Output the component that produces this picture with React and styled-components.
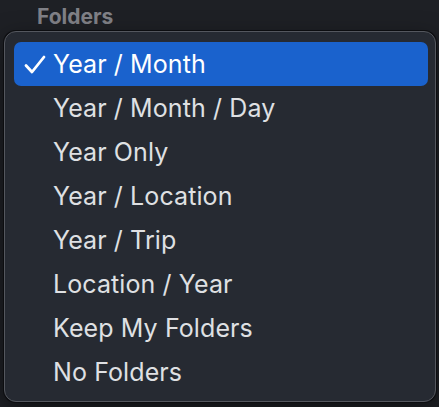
import React from "react";
import styled, { createGlobalStyle } from "styled-components";

const Global = createGlobalStyle`
  html, body { margin: 0; padding: 0; background: #1e2025; }
  body { font-family: Inter, "Noto Sans", sans-serif; -webkit-font-smoothing: antialiased; }
`;

const Page = styled.div`
  position: relative;
  width: 439px;
  height: 407px;
  overflow: hidden;
  background: #1e2025;
`;

const SectionLabel = styled.div`
  padding: 4px 0 0 37px;
  font-size: 21px;
  font-weight: 700;
  color: #808187;
  line-height: 26px;
`;

const Menu = styled.div`
  position: absolute;
  left: 4px;
  top: 31px;
  width: 432px;
  height: 371px;
  box-sizing: border-box;
  padding: 10px 7px 8px 9px;
  background: #262a32;
  border: 1px solid #54575e;
  border-radius: 12px;
  box-shadow: 0 0 0 1px #0c0d10, 0 8px 24px rgba(0, 0, 0, 0.5);
  display: flex;
  flex-direction: column;
`;

const Item = styled.div`
  position: relative;
  height: 44px;
  flex: 0 0 44px;
  display: flex;
  align-items: center;
  padding-left: 39px;
  border-radius: 7px;
  font-size: 25px;
  letter-spacing: 0.1px;
  color: ${(p) => (p.$selected ? "#ffffff" : "#dfe0e3")};
  background: ${(p) => (p.$selected ? "#1a62cd" : "transparent")};
`;

const Check = styled.svg`
  position: absolute;
  left: 10px;
  top: 13px;
  width: 22px;
  height: 20px;
`;

const items = [
  "Year / Month",
  "Year / Month / Day",
  "Year Only",
  "Year / Location",
  "Year / Trip",
  "Location / Year",
  "Keep My Folders",
  "No Folders",
];

export default function App() {
  return (
    <Page>
      <Global />
      <SectionLabel>Folders</SectionLabel>
      <Menu>
        {items.map((t, i) => (
          <Item key={t} $selected={i === 0}>
            {i === 0 && (
              <Check viewBox="0 0 22 20">
                <path
                  d="M2 10.5 L8 17 L20 2"
                  fill="none"
                  stroke="#ffffff"
                  strokeWidth="2.8"
                  strokeLinecap="round"
                  strokeLinejoin="round"
                />
              </Check>
            )}
            {t}
          </Item>
        ))}
      </Menu>
    </Page>
  );
}
